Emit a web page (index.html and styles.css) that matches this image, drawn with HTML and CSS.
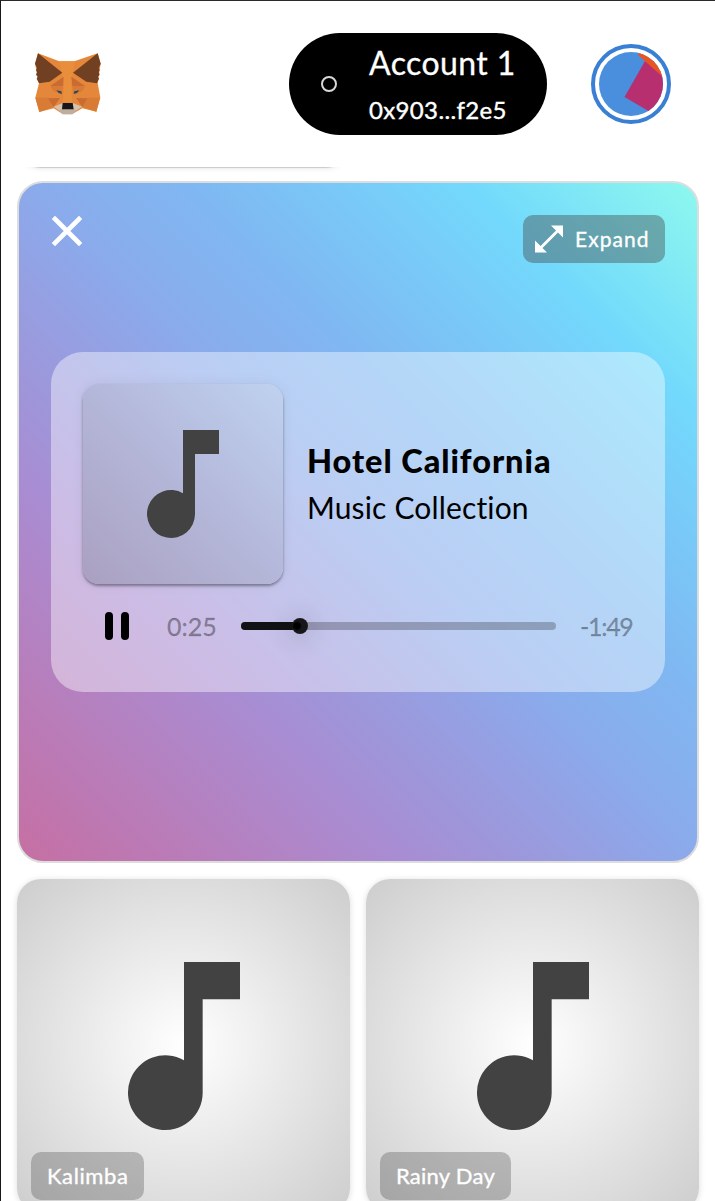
FILE: index.html
```html
<!DOCTYPE html>
<html lang="en">
<head>
<meta charset="utf-8">
<title>Music Collection</title>
<link rel="stylesheet" href="styles.css">
</head>
<body>
<div class="app">
  <header class="header">
    <svg class="fox" viewBox="0 0 300 255">
      <path fill="#e4873a" d="M54 40L118 64H163L233 40L242 71L233 129L241 173L229 215L187 205L157 222H128L101 205L58 216L46 173L57 130L45 71Z"/>
      <path fill="#e98e3b" d="M118 64H163L154 132L157 188H128L132 132Z"/>
      <path fill="#d87c35" d="M46 173H86L102 200L58 216ZM240 173H200L186 200L229 215Z"/>
      <path fill="#c96b32" d="M131 110L129 138L91 138ZM154 110L157 138L195 138ZM84 175L120 174L101 201ZM202 175L168 174L187 201Z"/>
      <path fill="#d87b36" d="M91 138H129L126 162L101 154ZM195 138H157L160 162L187 154Z"/>
      <path fill="#713f21" d="M54 40L127 98L89 125L57 130L50 116L53 110L48 104L51 96L48 91L51 84L45 71ZM233 40L159 98L199 125L231 130L237 116L234 110L239 104L236 96L239 91L236 84L242 71Z"/>
      <path fill="#33465c" d="M109 151L124 154L126 162L116 159ZM178 151L163 154L161 162L171 159Z"/>
      <path fill="#d7c1b0" d="M101 200L126 190H160L187 200L170 211L157 223H128L116 211Z"/>
      <path fill="#bfae9e" d="M116 211L126 207H160L170 211L157 223H128Z"/>
      <path fill="#17171a" d="M128 189H158L161 208H126Z"/>
    </svg>
    <div class="account">
      <span class="dot"></span>
      <div class="account-info">
        <span class="account-name">Account 1</span>
        <span class="account-address">0x903...f2e5</span>
      </div>
    </div>
    <div class="avatar">
      <svg viewBox="0 0 64 64">
        <rect width="64" height="64" fill="#4a8fdd"/>
        <path fill="#b82f70" d="M46 9L25.500 45L58 64H70V25Z"/>
        <path fill="#e95423" d="M41 0L39 3L64 25V0Z"/>
      </svg>
    </div>
  </header>
  <div class="previous"><div class="previous-card"></div></div>
  <main class="gallery">
    <section class="player">
      <div class="toolbar">
        <svg class="close" viewBox="0 0 28 28"><path d="M2 2L26 26M26 2L2 26"/></svg>
        <div class="expand">
          <svg viewBox="0 0 28 28"><path d="M16 .5H28V12.500L23 7.500L7.500 23L12 27.500H0V15.500L5.500 21L21 5.500Z"/></svg>
          <span class="expand-label">Expand</span>
        </div>
      </div>
      <div class="panel">
        <div class="track">
          <div class="cover">
            <svg class="note" viewBox="0 0 72 108"><path d="M36 0H72V24H48V84A24 24 0 1 1 36 63.200Z"/></svg>
          </div>
          <div class="track-info">
            <span class="title">Hotel California</span>
            <span class="subtitle">Music Collection</span>
          </div>
        </div>
        <div class="controls">
          <div class="pause"><i></i><i></i></div>
          <span class="time elapsed">0:25</span>
          <div class="progress"><div class="played"></div><div class="thumb"></div></div>
          <span class="time remaining">-1:49</span>
        </div>
      </div>
    </section>
    <article class="card">
      <svg class="note" viewBox="0 0 72 108"><path d="M36 0H72V24H48V84A24 24 0 1 1 36 63.200Z"/></svg>
      <div class="tag"><span class="kalimba">Kalimba</span></div>
    </article>
    <article class="card">
      <svg class="note" viewBox="0 0 72 108"><path d="M36 0H72V24H48V84A24 24 0 1 1 36 63.200Z"/></svg>
      <div class="tag"><span class="rainy">Rainy Day</span></div>
    </article>
  </main>
</div>
</body>
</html>
```
FILE: styles.css
```css
* { box-sizing: border-box; }
body { margin: 0; background: #fff; font-family: Lato, "Open Sans", sans-serif; font-variant-ligatures: none; }
svg { display: block; }
.app { height: 1201px; overflow: hidden; border-left: 1px solid #17171b; border-top: 1px solid #2b292d; }
.header { height: 166px; display: flex; align-items: flex-start; padding: 32px 43px 0 19px; }
.fox { width: 100px; height: 85px; margin-top: 7px; }
.account { width: 258px; height: 102px; margin-left: 169px; border-radius: 51px; background: #000; color: #fff; display: flex; align-items: center; }
.dot { width: 16px; height: 16px; margin-left: 32px; border: 2px solid #d8d8d8; border-radius: 50%; }
.account-info { display: flex; flex-direction: column; margin-left: 32px; padding-top: 4px; white-space: nowrap; }
.account-name { font-size: 32px; line-height: 48px; letter-spacing: .4px; -webkit-text-stroke: .3px; }
.account-address { font-size: 24px; line-height: 46px; letter-spacing: .35px; -webkit-text-stroke: .4px; }
.avatar { width: 80px; height: 80px; margin: 11px 0 0 44px; border: 4px solid #397fd3; border-radius: 50%; padding: 4px; }
.avatar svg { width: 64px; height: 64px; border-radius: 50%; }
.previous { height: 14px; padding: 0 16px; overflow: hidden; }
.previous-card { width: 333px; height: 48px; margin-top: -48px; border-radius: 24px; box-shadow: 0 1px 1px #c9c9c9, 0 1px 6px #e8e8e8; clip-path: inset(48px -10px -14px); }
.gallery { display: grid; grid-template-columns: 333px 333px; gap: 16px; padding-left: 16px; }
.player { grid-column: 1 / 3; height: 682px; border: 2px solid #ddd; border-radius: 26px; padding: 32px; background: linear-gradient(45deg, #c66fa3 0%, #a98cd2 28%, #9e96da 36%, #8aabec 51%, #7fb8f2 63%, #73d9fc 83%, #8df9ee 100%); }
.toolbar { display: flex; justify-content: space-between; height: 137px; }
.close { width: 28px; height: 28px; margin: 2px 0 0 2px; fill: none; stroke: #fff; stroke-width: 4.600; stroke-linecap: square; overflow: visible; }
.expand { width: 142px; height: 48px; display: flex; align-items: center; padding-left: 12px; gap: 12px; border-radius: 10px; background: rgba(66,66,66,.4); color: #fff; font-size: 21px; letter-spacing: 1.050px; -webkit-text-stroke: .35px; }
.expand svg { width: 28px; height: 28px; fill: #fff; }
.expand-label { margin-top: -1px; }
.panel { height: 340px; border-radius: 32px; padding: 32px; background: rgba(255,255,255,.42); }
.track { display: flex; align-items: center; gap: 24px; }
.cover { width: 200px; height: 200px; border-radius: 16px; display: grid; place-items: center; background: linear-gradient(45deg, #aaa0c1, #b4b7d9 50%, #bfd2f0); box-shadow: 0 2px 3px rgba(0,0,0,.38), 0 0 14px rgba(0,0,0,.06); }
.note { fill: #424242; width: 72px; height: 108px; }
.track-info { display: flex; flex-direction: column; white-space: nowrap; }
.title { font-size: 32.500px; line-height: 46px; font-weight: 900; letter-spacing: .95px; }
.subtitle { font-size: 30px; line-height: 46px; letter-spacing: .15px; }
.controls { height: 84px; display: flex; align-items: center; }
.pause { display: flex; flex: none; gap: 8px; margin-left: 22px; }
.pause i { width: 8px; height: 28px; border-radius: 4px; background: #000; }
.time { font-size: 25px; color: rgba(0,0,0,.36); white-space: nowrap; -webkit-text-stroke: .3px; }
.elapsed { width: 74px; flex: none; margin-left: 38px; }
.progress { width: 315px; height: 8px; border-radius: 4px; background: rgba(0,0,0,.24); position: relative; flex: none; }
.played { width: 63px; height: 8px; border-radius: 4px; background: #121216; }
.thumb { position: absolute; left: 51px; top: -4px; width: 16px; height: 16px; border-radius: 50%; background: radial-gradient(circle at 5px 8px, #000 3px, #17171b 5px); box-shadow: 0 2px 24px 5px rgba(0,0,0,.12); }
.remaining { flex: none; margin-left: 24px; letter-spacing: -1.300px; }
.card { height: 333px; border-radius: 24px; position: relative; background: radial-gradient(circle, #fff 0%, #cdcdcd 100%); box-shadow: 0 1px 6px rgba(0,0,0,.14); }
.card .note { width: 112px; height: 168px; margin: 83px 0 0 111px; }
.tag { position: absolute; left: 14px; top: 273px; height: 48px; display: flex; align-items: center; padding: 0 16px 2px; border-radius: 10px; background: rgba(66,66,66,.3); color: #fff; font-size: 22px; white-space: nowrap; -webkit-text-stroke: .35px; }
.kalimba { letter-spacing: .6px; }
.rainy { letter-spacing: .25px; }
```
